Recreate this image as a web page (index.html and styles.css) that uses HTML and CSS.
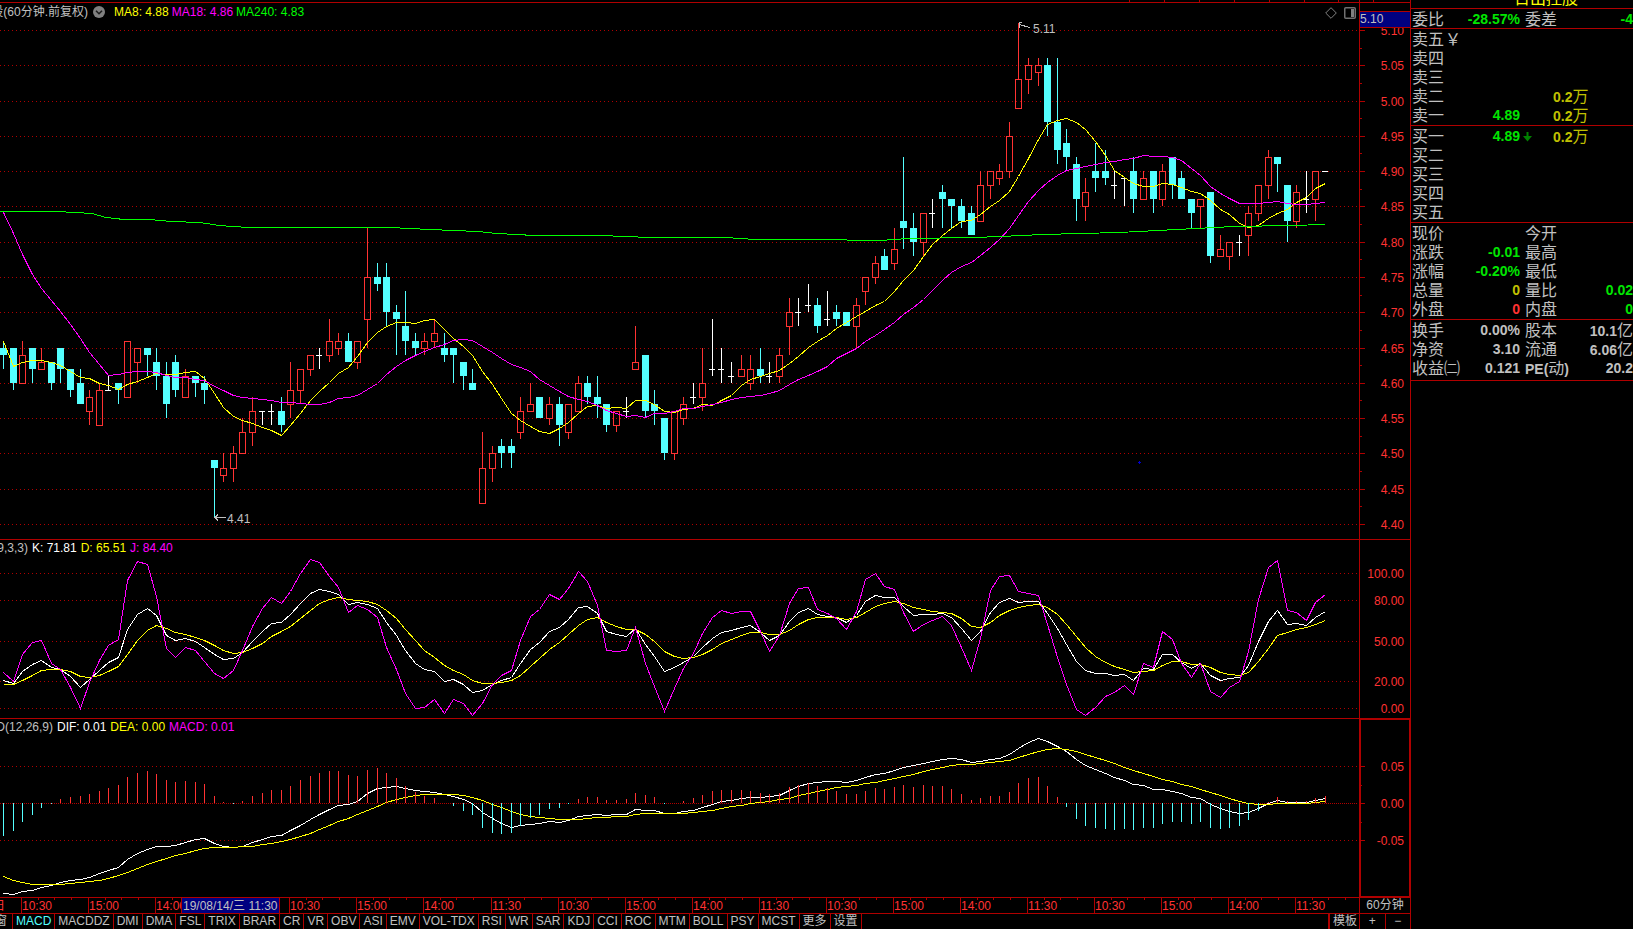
FILE: index.html
```html
<!DOCTYPE html>
<html lang="zh-CN">
<head>
<meta charset="utf-8">
<title>60分钟K线</title>
<link rel="stylesheet" href="styles.css">
</head>
<body>
<div class="terminal">
  <main class="board">
    <div class="row">
      <svg class="plot" id="ruler"></svg>
      <svg class="axis" id="ruler-axis"></svg>
    </div>
    <section class="row row-lined">
      <svg class="plot" id="price"></svg>
      <svg class="axis" id="price-axis"></svg>
      <div class="legend legend-price">
        <span class="legend-name legend-name-price">日出控股(60分钟.前复权)</span>
        <button class="round-button" aria-label="展开"><svg width="12" height="12" viewBox="0 0 12 12"><circle cx="6" cy="6" r="6" fill="#808080"/><path d="M3 4.7l3 3 3-3" fill="none" stroke="#1c1c1c" stroke-width="1.6"/></svg></button>
        <span class="yellow">MA8: 4.88</span>
        <span class="magenta">MA18: 4.86</span>
        <span class="lime">MA240: 4.83</span>
      </div>
      <div class="tools">
        <button class="tool" aria-label="标记"><svg width="12" height="12" viewBox="0 0 12 12"><path d="M6 .7L11.3 6 6 11.3.7 6z" fill="none" stroke="#808080"/></svg></button>
        <button class="tool" aria-label="侧栏"><svg width="12" height="12" viewBox="0 0 12 12"><rect x=".75" y=".75" width="10.500" height="10.500" rx="1" fill="none" stroke="#707070" stroke-width="1.500"/><path d="M7 2h3v8H7z" fill="#808080"/></svg></button>
      </div>
    </section>
    <section class="row row-lined">
      <svg class="plot" id="kdj"></svg>
      <svg class="axis" id="kdj-axis"></svg>
      <div class="legend">
        <span class="legend-name legend-name-kdj">KDJ(9,3,3)</span>
        <span class="white">K: 71.81</span>
        <span class="yellow">D: 65.51</span>
        <span class="magenta">J: 84.40</span>
      </div>
    </section>
    <section class="row row-lined">
      <svg class="plot" id="macd"></svg>
      <svg class="axis axis-active" id="macd-axis"></svg>
      <div class="legend">
        <span class="legend-name legend-name-macd">MACD(12,26,9)</span>
        <span class="white">DIF: 0.01</span>
        <span class="yellow">DEA: 0.00</span>
        <span class="magenta">MACD: 0.01</span>
      </div>
    </section>
    <div class="row row-lined">
      <svg class="plot" id="times"></svg>
      <div class="axis period">60分钟</div>
    </div>
    <nav class="row">
      <div class="tabs">
        <button class="tab tab-cut">窗口</button><button class="tab tab-on">MACD</button><button class="tab">MACDDZ</button><button class="tab">DMI</button><button class="tab">DMA</button><button class="tab">FSL</button><button class="tab">TRIX</button><button class="tab">BRAR</button><button class="tab">CR</button><button class="tab">VR</button><button class="tab">OBV</button><button class="tab">ASI</button><button class="tab">EMV</button><button class="tab">VOL-TDX</button><button class="tab">RSI</button><button class="tab">WR</button><button class="tab">SAR</button><button class="tab">KDJ</button><button class="tab">CCI</button><button class="tab">ROC</button><button class="tab">MTM</button><button class="tab">BOLL</button><button class="tab">PSY</button><button class="tab">MCST</button><button class="tab">更多</button><button class="tab">设置</button>
        <button class="template">模板</button>
      </div>
      <div class="axis zoomer"><button aria-label="放大">+</button><button aria-label="缩小">−</button></div>
    </nav>
  </main>

  <aside class="quote">
    <header class="quote-title"><span>日出控股</span></header>
    <dl class="block">
      <div class="line"><dt>委比</dt><dd class="green">-28.57%</dd><dt>委差</dt><dd class="green">-4</dd></div>
    </dl>
    <dl class="block">
      <div class="line"><dt>卖五<span class="yen">￥</span></dt><dd></dd></div>
      <div class="line"><dt>卖四</dt><dd></dd></div>
      <div class="line"><dt>卖三</dt><dd></dd></div>
      <div class="line"><dt>卖二</dt><dd></dd><dd class="volume">0.2<span class="cjk">万</span></dd></div>
      <div class="line"><dt>卖一</dt><dd class="green">4.89</dd><dd class="volume">0.2<span class="cjk">万</span></dd></div>
    </dl>
    <dl class="block">
      <div class="line"><dt>买一</dt><dd class="green">4.89</dd><dd class="volume"><svg class="down" width="9" height="10" viewBox="0 0 9 10"><path d="M3.500 0h2v4H9L4.500 9.500 0 4h3.500z" fill="#008000"/></svg>0.2<span class="cjk">万</span></dd></div>
      <div class="line"><dt>买二</dt><dd></dd></div>
      <div class="line"><dt>买三</dt><dd></dd></div>
      <div class="line"><dt>买四</dt><dd></dd></div>
      <div class="line"><dt>买五</dt><dd></dd></div>
    </dl>
    <dl class="block">
      <div class="line"><dt>现价</dt><dd></dd><dt>今开</dt><dd></dd></div>
      <div class="line"><dt>涨跌</dt><dd class="green">-0.01</dd><dt>最高</dt><dd></dd></div>
      <div class="line"><dt>涨幅</dt><dd class="green">-0.20%</dd><dt>最低</dt><dd></dd></div>
      <div class="line"><dt>总量</dt><dd class="gold">0</dd><dt>量比</dt><dd class="green">0.02</dd></div>
      <div class="line"><dt>外盘</dt><dd class="red">0</dd><dt>内盘</dt><dd class="green">0</dd></div>
    </dl>
    <dl class="block">
      <div class="line"><dt>换手</dt><dd>0.00%</dd><dt>股本</dt><dd>10.1<span class="cjk">亿</span></dd></div>
      <div class="line"><dt>净资</dt><dd>3.10</dd><dt>流通</dt><dd>6.06<span class="cjk">亿</span></dd></div>
      <div class="line"><dt>收益㈡</dt><dd>0.121</dd><dt><b>PE(</b>动<b>)</b></dt><dd>20.2</dd></div>
    </dl>
  </aside>
</div>
<script src="chart.js"></script>
</body>
</html>
```

FILE: styles.css
```css
* { box-sizing: border-box; }

body {
  margin: 0;
  background: #000;
  color: #c0c0c0;
  font: 12px/15px "Liberation Sans", "Noto Sans CJK SC", sans-serif;
  overflow: hidden;
}

button {
  margin: 0;
  padding: 0;
  border: 0;
  background: none;
  color: inherit;
  font: inherit;
}

.terminal {
  display: grid;
  grid-template-columns: minmax(0, 1fr) 222px;
  height: 100vh;
}

.board {
  display: grid;
  grid-template-rows: 3px minmax(0, 537fr) minmax(0, 179fr) minmax(0, 179fr) 16px 15px;
  min-width: 0;
}

.row {
  position: relative;
  display: flex;
  min-height: 0;
}

.row-lined { border-bottom: 1px solid #b00000; }

.plot {
  flex: 1;
  display: block;
  min-width: 0;
  height: 100%;
}

.axis {
  flex: none;
  display: block;
  width: 52px;
  height: 100%;
  border-left: 1px solid #b00000;
  border-right: 1px solid #b00000;
}

.axis-active { box-shadow: inset 0 0 0 1px #b00000; }

.legend {
  position: absolute;
  top: 1px;
  left: 0;
  display: flex;
  gap: 4px;
  white-space: nowrap;
}

.legend-price {
  top: 2px;
  gap: 3px;
}

.legend-name {
  display: flex;
  justify-content: flex-end;
  overflow: hidden;
}

.legend-name-price { width: 88px; }
.legend-name-kdj { width: 28px; }
.legend-name-macd { width: 53px; }

.round-button {
  height: 12px;
  margin: 1px 6px 0 2px;
}

.round-button svg, .tool svg { display: block; }

.tools {
  position: absolute;
  top: 4px;
  right: 55px;
  display: flex;
  gap: 7px;
}

.white { color: #fff; }
.yellow { color: #ff0; }
.magenta { color: #f0f; }
.lime { color: #0f0; }
.green { color: #00e600; }
.gold { color: #c0c000; }
.red { color: #ff3232; }

.period { text-align: center; }

.tabs {
  flex: 1;
  display: flex;
  min-width: 0;
  overflow: hidden;
}

.tab {
  flex: none;
  padding: 0 3px;
  border-right: 1px solid #b00000;
}

.tab-cut {
  display: flex;
  justify-content: flex-end;
  width: 13px;
  padding: 0 5px 0 0;
  overflow: hidden;
}

.tab-on { color: #54ffff; }

.template {
  margin-left: auto;
  padding: 0 2px 0 3px;
  border-left: 2px solid #b00000;
}

.zoomer { display: flex; }
.zoomer button { flex: 1; }
.zoomer button + button { border-left: 1px solid #b00000; }

.quote {
  overflow: hidden;
  font-size: 16px;
  line-height: 19px;
}

.quote-title {
  display: flex;
  flex-direction: column;
  justify-content: flex-end;
  align-items: center;
  height: 8px;
  padding-left: 48px;
  overflow: hidden;
  color: #ff0;
}

.block {
  margin: 0;
  padding-bottom: 1px;
  border-top: 1px solid #b00000;
}

.block:nth-of-type(1) { padding-bottom: 0; }
.block:last-child { padding-bottom: 3px; border-bottom: 1px solid #b00000; }

.line {
  display: grid;
  grid-template-columns: 49px 59px 52px 56px;
  height: 19px;
  padding-left: 1px;
  line-height: 21px;
}

.line dt { white-space: nowrap; }
.line dt:nth-of-type(2) { padding-left: 5px; }

.line dd, .line b {
  font-size: 14px;
  font-weight: bold;
}

.line dd {
  margin: 0;
  text-align: right;
  white-space: nowrap;
}

.line dd:last-child:nth-child(4) { margin-right: -5px; }

.line .volume {
  grid-column: 3 / 5;
  padding-left: 33px;
  color: #c0c000;
  text-align: left;
}

.cjk {
  font-size: 16px;
  font-weight: normal;
}

.yen { margin-left: 1px; }

.down { margin: 0 21px 0 -30px; }

.plot text, .axis text { font-size: 12px; }
```

FILE: chart.js
```js
(function () {
  var RED = '#ff3232', LINE = '#b00000', CYAN = '#54ffff';

  // kind, body top, body bottom, high, low (prices in cents)
  var candles = ('C465 464 466 462,C465 460 465 459,R464 460 466 460,C465 462 465 460,R463 462 465 462,C463 460 463 459,C465 462 465 460,' +
    'C462 459 462 458,C460 457 462 457,R458 456 459 454,R459 454 460 454,W459 459 461 459,C460 459 460 457,R466 458 466 458,R465 463 465 460,' +
    'C465 464 465 461,C463 461 465 459,C461 457 463 455,C463 459 464 458,R461 458 462 458,C461 460 461 458,C460 459 461 457,C449 448 449 441,' +
    'R448 447 450 446,R450 448 451 446,R453 450 455 450,R456 453 458 451,W456 456 456 454,W456 456 457 454,C456 454 458 453,R459 457 463 455,' +
    'R462 459 462 457,R464 462 464 461,W464 464 465 462,R466 464 469 463,R466 465 467 464,C466 463 467 463,R466 463 466 462,R475 469 482 465,' +
    'C475 474 477 473,C475 470 477 468,C470 469 471 464,C468 466 473 464,C466 465 467 464,R466 465 467 464,R467 466 469 465,C465 464 467 463,' +
    'C465 464 465 460,C463 461 463 459,C460 459 462 459,R448 443 453 443,R450 448 451 446,C451 450 452 448,C451 450 452 448,R456 453 458 452,' +
    'R457 456 460 456,C458 455 458 455,R457 455 458 454,C457 454 458 451,R457 453 457 452,R460 456 461 456,C460 458 461 457,C458 457 461 455,' +
    'C457 454 457 453,R456 454 456 453,W456 456 458 455,R463 462 468 462,C464 456 464 455,C457 456 459 454,C455 450 455 449,R456 450 456 449,' +
    'R457 455 458 454,W458 458 460 457,R460 458 465 456,W462 462 469 461,W462 462 465 460,W461 461 463 460,R462 461 464 461,R462 460 464 459,' +
    'C462 461 465 460,W461 461 463 460,R464 461 465 460,R470 468 472 464,W470 470 472 468,W471 471 474 470,C471 468 472 467,W469 469 473 468,' +
    'C470 469 471 468,C470 468 470 468,R471 468 472 465,R475 473 475 471,R477 475 478 474,C478 476 479 476,R479 477 482 476,C483 482 492 479,' +
    'C482 480 484 478,R484 480 484 478,W484 484 486 482,C487 486 488 482,C486 485 486 482,C485 483 486 482,C484 481 485 481,R488 483 490 483,' +
    'R490 488 490 486,R490 489 491 488,R495 490 497 489,R503 499 511 499,R505 503 506 501,R505 504 506 502,C505 497 506 495,C497 493 506 491,' +
    'C494 492 496 490,C491 486 492 483,R487 485 489 483,C490 489 494 487,C490 489 493 488,W488 488 490 486,W489 489 489 485,C490 486 492 484,' +
    'R489 486 490 486,C490 486 490 484,R490 486 491 485,C492 488 492 486,C489 486 490 486,C486 484 486 482,R486 485 486 482,C487 478 487 477,' +
    'R479 478 481 478,R480 478 480 476,W480 480 481 478,R484 481 485 478,R488 484 488 483,R492 488 493 486,C492 491 492 487,C488 483 488 480,' +
    'R487 483 488 482,W486 486 490 484,R490 486 490 483,W490 490 490 490').split(',').map(function (s) {
    var v = s.slice(1).split(' ').map(Number), k = s[0];
    return { kind: k, top: v[0], bottom: v[1], high: v[2], low: v[3], close: k === 'C' ? v[1] : v[0] };
  });

  function average(n, lead) {
    return candles.map(function (c, i) {
      if (i < lead.length) return lead[i];
      var sum = 0;
      for (var j = i - n + 1; j <= i; j++) sum += candles[j].close;
      return sum / n;
    });
  }
  var ma8 = average(8, [466, 462.4, 463, 463.3, 463.3, 463, 462.5]);
  var ma18 = average(18, [484.2, 481.3, 478.3, 475.4, 473.4, 471.8, 470.2, 468.4, 466.3, 464.4, 462.7, 461.1, 461.3, 461.6, 461.7, 461.7, 461.5]);
  // long average: x, y pairs
  var ma240 = [0, 208, 55, 208, 76, 209, 92, 210, 106, 214, 124, 216, 150, 216, 171, 218, 200, 219, 219, 222, 248, 224, 390, 224, 430, 226, 478, 228,
    497, 230, 535, 232, 600, 232, 650, 234, 725, 234, 756, 236, 813, 236, 880, 237, 908, 235, 975, 234, 1023, 232, 1042, 231, 1119, 229, 1177, 226, 1234, 223, 1291, 222, 1325, 221];

  var K = [20.5, 18.5, 27.4, 32.6, 35.5, 30.4, 29, 23.5], D = [17.5, 17.8, 21, 24.4, 28.1, 28.9, 29, 27.4];
  for (var i = 8; i < candles.length; i++) {
    var part = candles.slice(i - 8, i + 1);
    var hi = Math.max.apply(null, part.map(function (c) { return c.high; }));
    var lo = Math.min.apply(null, part.map(function (c) { return c.low; }));
    K[i] = (K[i - 1] * 2 + (candles[i].close - lo) / (hi - lo) * 100) / 3;
    D[i] = (D[i - 1] * 2 + K[i]) / 3;
  }
  var J = K.map(function (k, n) { return 3 * k - 2 * D[n]; });

  var fast = 473.06, slow = 485.22, DIF = [fast - slow], DEA = [-9.9];
  for (i = 1; i < candles.length; i++) {
    fast += (candles[i].close - fast) * 2 / 13;
    slow += (candles[i].close - slow) * 2 / 27;
    DIF[i] = fast - slow;
    DEA[i] = DEA[i - 1] + (DIF[i] - DEA[i - 1]) * 0.2;
  }

  function el(id) { return document.getElementById(id); }
  function path(d, color, extra) {
    return '<path d="' + d + '" stroke="' + color + '" fill="none" shape-rendering="crispEdges" ' + (extra || '') + '/>';
  }
  function box(x, y, w, h, color) {
    return '<rect x="' + x + '" y="' + y + '" width="' + w + '" height="' + h + '" fill="' + color + '" shape-rendering="crispEdges"/>';
  }
  function label(x, y, s, color, anchor) {
    return '<text x="' + x + '" y="' + y + '" fill="' + color + '" text-anchor="' + (anchor || 'start') + '">' + s + '</text>';
  }
  function dots(y, W, dash) {
    return path('M0 ' + (y + 0.5) + 'H' + (W - 1), LINE, 'stroke-dasharray="' + dash + '"');
  }

  function draw() {
    var W = el('price').clientWidth, f = W / 1359;
    function X(n) { return Math.floor((3.45 + 9.58 * n) * f); }
    function curve(values, Y, color) {
      return path('M' + values.map(function (v, n) { return (X(n) + 0.5) + ' ' + (Math.round(Y(v)) + 0.5); }).join('L'), color);
    }

    var H = el('price').clientHeight, g = H / 536, out = '', ax = '';
    function P(p) { return Math.round((27 + (510 - p) * 7.057) * g); }
    for (var p = 510; p >= 440; p -= 5) {
      out += dots(P(p), W, '1 3');
      ax += box(0, P(p), 5, 1, LINE) + label(44, P(p) + 5, (p / 100).toFixed(2), RED, 'end');
      if (p > 440) ax += box(0, P(p - 2.5), 2, 1, LINE);
    }
    candles.forEach(function (c, n) {
      var x = X(n), a = P(c.top), b = P(c.bottom), h = P(c.high), l = P(c.low);
      if (c.kind === 'C') out += box(x - 3, a, 7, b - a, CYAN) + box(x, h, 1, l - h, CYAN);
      else if (c.kind === 'W') out += box(x - 3, a, 6, 1, '#fff') + box(x, h, 1, l - h, '#fff');
      else out += path('M' + (x - 2.5) + ' ' + (a + 0.5) + 'h6V' + (b + 0.5) + 'h-6z', RED) + box(x, h, 1, a - h, RED) + box(x, b, 1, l - b, RED);
    });
    out += curve(ma8, P, '#ff0') + curve(ma18, P, '#f0f');
    var d = '';
    for (var i = 0; i < ma240.length; i += 2) d += (i ? 'L' : 'M') + (ma240[i] * f) + ' ' + (Math.round(ma240[i + 1] * g) + 0.5);
    out += path(d, '#0f0');
    var hx = X(106), hy = P(511), lx = X(22), ly = P(441);
    out += path('M' + (hx + 1) + ' ' + (hy + 1.5) + 'l11 3M' + (hx + 4) + ' ' + (hy - 0.5) + 'h-3v5', '#c0c0c0') + label(hx + 15, hy + 10, '5.11', '#c0c0c0');
    out += path('M' + (lx + 1) + ' ' + (ly + 0.5) + 'h11M' + (lx + 4) + ' ' + (ly - 2.5) + 'l-3 3l3 3', '#c0c0c0') + label(lx + 13, ly + 6, '4.41', '#c0c0c0');
    out += box(1138 * f, 459 * g, 3, 1, '#0000d0') + box(1139 * f, 458 * g, 1, 3, '#0000d0');
    el('price').innerHTML = out;
    ax += '<rect x="-1" y="8.500" width="52" height="16" fill="#000080" stroke="' + LINE + '" shape-rendering="crispEdges"/>' + label(0, 20, '5.10', '#c0c0c0');
    el('price-axis').innerHTML = ax;

    g = el('kdj').clientHeight / 178;
    function Q(v) { return Math.round((168 - v * 1.35) * g); }
    out = ''; ax = '';
    [100, 80, 50, 20, 0].forEach(function (v) {
      out += dots(Q(v), W, '1 3');
      ax += label(44, Q(v) + 5, v.toFixed(2), RED, 'end');
    });
    el('kdj').innerHTML = out + curve(K, Q, '#fff') + curve(D, Q, '#ff0') + curve(J, Q, '#f0f');
    el('kdj-axis').innerHTML = ax;

    g = el('macd').clientHeight / 178;
    function M(v) { return Math.round((84 - v * 7.4) * g); }
    out = ''; ax = '';
    [5, 0, -5].forEach(function (v) {
      out += dots(M(v), W, v ? '1 3' : '1 1');
      ax += box(0, M(v), 5, 1, LINE) + label(44, M(v) + 5, (v / 100).toFixed(2), RED, 'end');
      if (v > -5) ax += box(0, M(v - 2.5), 2, 1, LINE);
    });
    out += curve(DIF, M, '#fff') + curve(DEA, M, '#ff0');
    DIF.forEach(function (v, n) {
      var y = M(2 * (v - DEA[n])), z = M(0);
      out += v > DEA[n] ? box(X(n), y, 1, z - y, RED) : box(X(n), z, 1, y - z, CYAN);
    });
    el('macd').innerHTML = out;
    el('macd-axis').innerHTML = ax;

    var hours = ['10:30', '15:00', '14:00', '11:30'];
    out = label(-7, 12, '日', RED);
    for (var k = 0; k < 20; k++) {
      var at = Math.floor((21.6 + 67.06 * k) * f);
      out += box(at, 0, 1, 15, LINE);
      // the fourth label lies under the cursor date
      if (k !== 3) out += label(at + 1, 12, hours[k % 4], RED);
      for (var m = 1; m < 4; m++) out += box(at + Math.round(16.7 * m * f), 0, 1, 2, LINE);
    }
    out += '<rect x="' + (Math.round(181 * f) + 0.5) + '" y="-1" width="98" height="17" fill="#000080" stroke="' + LINE + '"/>' + label(Math.round(183 * f), 12, '19/08/14/三 11:30', '#c0c0c0');
    el('times').innerHTML = out;

    out = path('M0 2.500H' + W, LINE);
    for (k = 0; k < 7; k++) out += box(Math.round((1129 + k * 34.9) * f), 0, 1, 2, LINE);
    el('ruler').innerHTML = out;
    el('ruler-axis').innerHTML = path('M0 2.500H52', LINE) + box(13, 0, 1, 2, LINE);
  }

  draw();
  window.addEventListener('resize', draw);
})();
```
